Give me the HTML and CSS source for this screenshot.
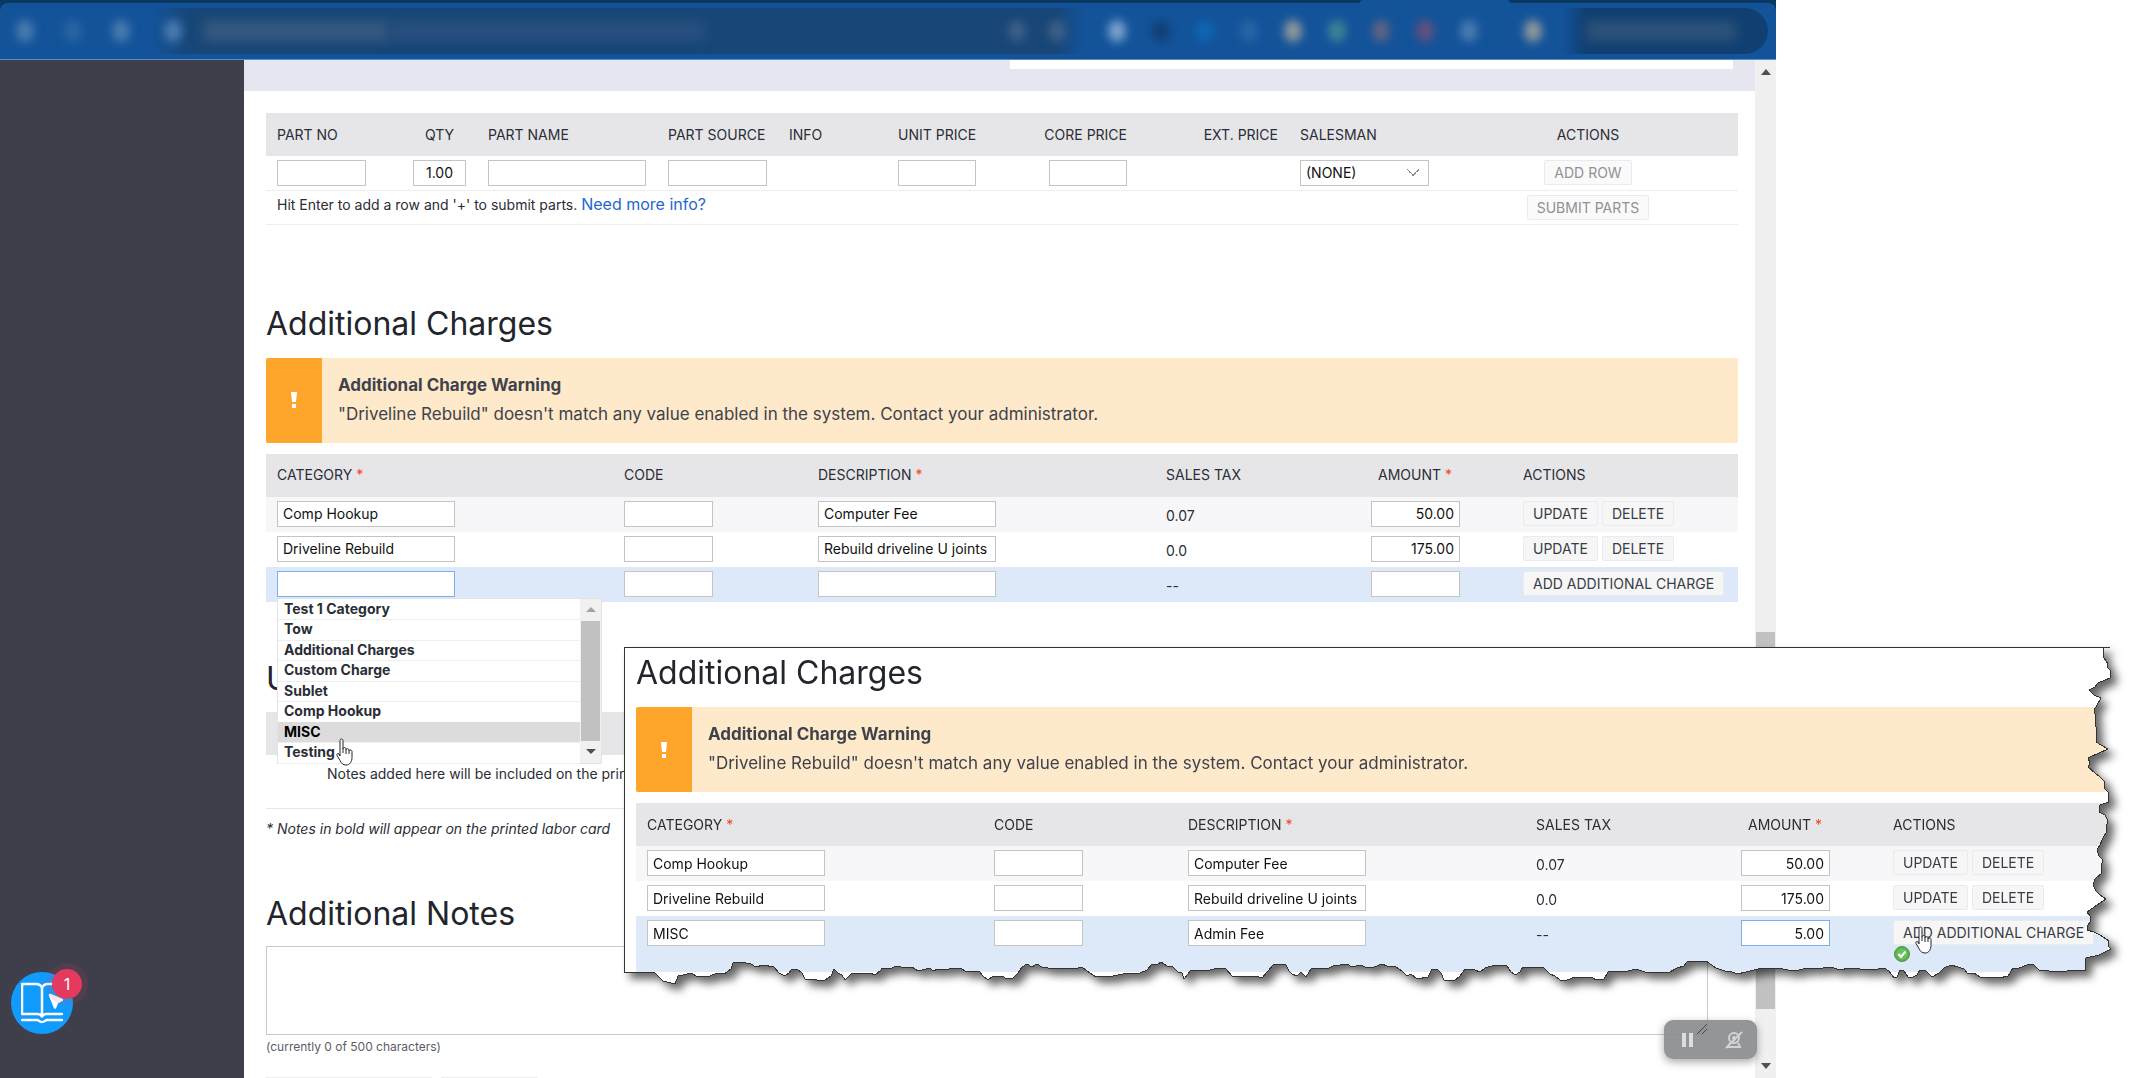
FILE: index.html
```html
<!DOCTYPE html>
<html lang="en">
<head>
    <meta charset="UTF-8">
    <meta name="viewport" content="width=device-width, initial-scale=1.0">
    <title>Additional Charges</title>
    <link rel="stylesheet" href="styles.css">
</head>
<body>
    <div class="window">
        <!-- Browser toolbar, contents blurred out -->
        <div class="tabs"><span class="tab"></span></div>
        <div class="toolbar-wrap">
            <div class="toolbar">
                <div class="nav-icons">
                    <span class="dot"></span>
                    <span class="dot faint"></span>
                    <span class="dot"></span>
                </div>
                <div class="address">
                    <span class="dot"></span>
                    <span class="smudge url"></span>
                    <span class="smudge path"></span>
                    <span class="dot muted push"></span>
                    <span class="dot muted"></span>
                </div>
                <div class="extensions">
                    <span class="dot light"></span>
                    <span class="dot dark"></span>
                    <span class="dot azure"></span>
                    <span class="dot faint"></span>
                    <span class="dot sand"></span>
                    <span class="dot green"></span>
                    <span class="dot brown"></span>
                    <span class="dot red"></span>
                    <span class="dot"></span>
                </div>
                <span class="dot sand avatar"></span>
                <div class="pill"><span class="smudge"></span></div>
            </div>
        </div>

        <div class="app">
            <aside class="sidebar"></aside>

            <main class="main">
                <div class="strip"><div class="strip-box"></div></div>

                <div class="content">
                    <table class="grid parts">
                        <colgroup>
                            <col class="p-no"><col class="p-qty"><col class="p-name"><col class="p-source"><col class="p-info">
                            <col class="p-unit"><col class="p-core"><col class="p-ext"><col><col class="p-actions">
                        </colgroup>
                        <thead>
                            <tr>
                                <th>PART NO</th>
                                <th class="center">QTY</th>
                                <th>PART NAME</th>
                                <th>PART SOURCE</th>
                                <th>INFO</th>
                                <th>UNIT PRICE</th>
                                <th class="right">CORE PRICE</th>
                                <th class="right">EXT. PRICE</th>
                                <th>SALESMAN</th>
                                <th class="center">ACTIONS</th>
                            </tr>
                        </thead>
                        <tbody>
                            <tr>
                                <td><input class="w-code" type="text" aria-label="Part no"></td>
                                <td><input class="w-full center" type="text" value="1.00" aria-label="Qty"></td>
                                <td><input class="w-full" type="text" aria-label="Part name"></td>
                                <td><input class="w-full" type="text" aria-label="Part source"></td>
                                <td></td>
                                <td><input class="w-full" type="text" aria-label="Unit price"></td>
                                <td class="right"><input class="w-price" type="text" aria-label="Core price"></td>
                                <td></td>
                                <td><select aria-label="Salesman"><option>(NONE)</option></select></td>
                                <td class="center"><button class="btn disabled" type="button">ADD ROW</button></td>
                            </tr>
                            <tr>
                                <td class="hint" colspan="9">Hit Enter to add a row and '+' to submit parts. <a href="#">Need more info?</a></td>
                                <td class="center"><button class="btn disabled" type="button">SUBMIT PARTS</button></td>
                            </tr>
                        </tbody>
                    </table>

                    <h2 class="charges-title">Additional Charges</h2>
                    <div class="alert">
                        <div class="alert-icon">
                            <svg width="6" height="16" viewBox="0 0 6 16"><path d="M0 0h6l-1 10H1zM1 12h4v4H1z" fill="#fff"/></svg>
                        </div>
                        <div class="alert-text">
                            <strong>Additional Charge Warning</strong>
                            <p>"Driveline Rebuild" doesn't match any value enabled in the system. Contact your administrator.</p>
                        </div>
                    </div>
                    <table class="grid charges">
                        <colgroup>
                            <col class="c-category"><col class="c-code"><col class="c-desc"><col class="c-tax"><col class="c-amount"><col>
                        </colgroup>
                        <thead>
                            <tr>
                                <th>CATEGORY <span class="req">*</span></th>
                                <th>CODE</th>
                                <th>DESCRIPTION <span class="req">*</span></th>
                                <th>SALES TAX</th>
                                <th class="amount">AMOUNT <span class="req">*</span></th>
                                <th>ACTIONS</th>
                            </tr>
                        </thead>
                        <tbody>
                            <tr class="odd">
                                <td><input class="w-text" type="text" value="Comp Hookup" aria-label="Category"></td>
                                <td><input class="w-code" type="text" aria-label="Code"></td>
                                <td><input class="w-text" type="text" value="Computer Fee" aria-label="Description"></td>
                                <td class="tax">0.07</td>
                                <td class="amount"><input class="w-code right" type="text" value="50.00" aria-label="Amount"></td>
                                <td><div class="actions"><button class="btn" type="button">UPDATE</button><button class="btn" type="button">DELETE</button></div></td>
                            </tr>
                            <tr>
                                <td><input class="w-text" type="text" value="Driveline Rebuild" aria-label="Category"></td>
                                <td><input class="w-code" type="text" aria-label="Code"></td>
                                <td><input class="w-text" type="text" value="Rebuild driveline U joints" aria-label="Description"></td>
                                <td class="tax">0.0</td>
                                <td class="amount"><input class="w-code right" type="text" value="175.00" aria-label="Amount"></td>
                                <td><div class="actions"><button class="btn" type="button">UPDATE</button><button class="btn" type="button">DELETE</button></div></td>
                            </tr>
                            <tr class="active">
                                <td>
                                    <div class="combo">
                                        <input class="w-text focused" type="text" aria-label="Category">
                                        <div class="dropdown">
                                            <ul class="options">
                                                <li>Test 1 Category</li>
                                                <li>Tow</li>
                                                <li>Additional Charges</li>
                                                <li>Custom Charge</li>
                                                <li>Sublet</li>
                                                <li>Comp Hookup</li>
                                                <li class="hover">MISC</li>
                                                <li>Testing</li>
                                            </ul>
                                            <div class="list-scroll">
                                                <svg class="arrow" width="10" height="5" viewBox="0 0 10 5"><path d="M0 5l5-5 5 5z" fill="#a3a3a3"/></svg>
                                                <div class="list-thumb"></div>
                                                <svg class="arrow" width="10" height="5" viewBox="0 0 10 5"><path d="M0 0l5 5 5-5z" fill="#505050"/></svg>
                                            </div>
                                            <svg class="hand" width="20" height="28" viewBox="0 0 20 28">
                                                <path d="M4 2.5c0-2 3-2 3 0v8.5c0-2 3-2 3 0v1c0-2 3-1.5 3 0v1c0-1.5 3-1.5 3 .5v6c0 4-2 7.5-6 7.5-3 0-4.500-1.500-6-4.500l-3-5c-.8-1.500.8-2.500 2-1.500L4 18z" fill="#fff" stroke="#23252d"/>
                                                <path d="M7 11v4M10 12v4M13 13v3" stroke="#23252d"/>
                                            </svg>
                                        </div>
                                    </div>
                                </td>
                                <td><input class="w-code" type="text" aria-label="Code"></td>
                                <td><input class="w-text" type="text" aria-label="Description"></td>
                                <td class="tax">--</td>
                                <td class="amount"><input class="w-code right" type="text" aria-label="Amount"></td>
                                <td><div class="actions"><button class="btn" type="button">ADD ADDITIONAL CHARGE</button></div></td>
                            </tr>
                        </tbody>
                    </table>

                    <h2 class="notes-title">U</h2>
                    <div class="notes-head"></div>
                    <p class="notes-row">Notes added here will be included on the printed labor card</p>
                    <p class="notes-hint">* Notes in bold will appear on the printed labor card</p>

                    <h2 class="extra-title"><label for="notes">Additional Notes</label></h2>
                    <textarea id="notes"></textarea>
                    <p class="counter">(currently 0 of 500 characters)</p>
                    <div class="foot-buttons"><span class="foot-wide"></span><span class="foot-short"></span></div>
                </div>
            </main>

            <div class="scrollbar">
                <svg class="arrow" width="10" height="6" viewBox="0 0 10 6"><path d="M0 6l5-6 5 6z" fill="#505050"/></svg>
                <div class="space-above"></div>
                <div class="thumb"></div>
                <div class="space-below"></div>
                <svg class="arrow" width="10" height="6" viewBox="0 0 10 6"><path d="M0 0l5 6 5-6z" fill="#505050"/></svg>
            </div>
        </div>

        <button class="help" type="button" aria-label="Help guides">
            <svg width="42" height="42" viewBox="0 0 42 42" fill="none" stroke="#fff" stroke-width="2.5" stroke-linecap="round" stroke-linejoin="round">
                <path d="M21 6c-1-3-3-4-6-4H1v30h16c2 0 3 1 4 2.500 1-1.500 2-2.500 4-2.500h16M21 6c1-3 3-4 6-4h6M21 6v28"/>
                <path d="M1 38h15c2 0 2 2 5 2s3-2 5-2h15"/>
                <path d="M29 13l12 5-5 2.500-2 5z" fill="#fff"/>
            </svg>
            <span class="badge">1</span>
        </button>
    </div>

    <!-- Second shot with torn edges, laid over the page -->
    <div class="torn">
        <div class="torn-page">
            <h2>Additional Charges</h2>
            <div class="alert">
                <div class="alert-icon">
                    <svg width="6" height="16" viewBox="0 0 6 16"><path d="M0 0h6l-1 10H1zM1 12h4v4H1z" fill="#fff"/></svg>
                </div>
                <div class="alert-text">
                    <strong>Additional Charge Warning</strong>
                    <p>"Driveline Rebuild" doesn't match any value enabled in the system. Contact your administrator.</p>
                </div>
            </div>
            <table class="grid charges">
                <colgroup>
                    <col class="c-category"><col class="c-code"><col class="c-desc"><col class="c-tax"><col class="c-amount"><col>
                </colgroup>
                <thead>
                    <tr>
                        <th>CATEGORY <span class="req">*</span></th>
                        <th>CODE</th>
                        <th>DESCRIPTION <span class="req">*</span></th>
                        <th>SALES TAX</th>
                        <th class="amount">AMOUNT <span class="req">*</span></th>
                        <th>ACTIONS</th>
                    </tr>
                </thead>
                <tbody>
                    <tr class="odd">
                        <td><input class="w-text" type="text" value="Comp Hookup" aria-label="Category"></td>
                        <td><input class="w-code" type="text" aria-label="Code"></td>
                        <td><input class="w-text" type="text" value="Computer Fee" aria-label="Description"></td>
                        <td class="tax">0.07</td>
                        <td class="amount"><input class="w-code right" type="text" value="50.00" aria-label="Amount"></td>
                        <td><div class="actions"><button class="btn" type="button">UPDATE</button><button class="btn" type="button">DELETE</button></div></td>
                    </tr>
                    <tr>
                        <td><input class="w-text" type="text" value="Driveline Rebuild" aria-label="Category"></td>
                        <td><input class="w-code" type="text" aria-label="Code"></td>
                        <td><input class="w-text" type="text" value="Rebuild driveline U joints" aria-label="Description"></td>
                        <td class="tax">0.0</td>
                        <td class="amount"><input class="w-code right" type="text" value="175.00" aria-label="Amount"></td>
                        <td><div class="actions"><button class="btn" type="button">UPDATE</button><button class="btn" type="button">DELETE</button></div></td>
                    </tr>
                    <tr class="active tall">
                        <td><input class="w-text" type="text" value="MISC" aria-label="Category"></td>
                        <td><input class="w-code" type="text" aria-label="Code"></td>
                        <td><input class="w-text" type="text" value="Admin Fee" aria-label="Description"></td>
                        <td class="tax">--</td>
                        <td class="amount"><input class="w-code right focused" type="text" value="5.00" aria-label="Amount"></td>
                        <td>
                            <div class="combo actions">
                                <button class="btn" type="button">ADD ADDITIONAL CHARGE</button>
                                <svg class="hand" width="20" height="28" viewBox="0 0 20 28">
                                    <path d="M4 2.500c0-2 3-2 3 0v8.500c0-2 3-2 3 0v1c0-2 3-1.500 3 0v1c0-1.500 3-1.500 3 .5v6c0 4-2 7.500-6 7.500-3 0-4.500-1.500-6-4.500l-3-5c-.8-1.500.8-2.500 2-1.500L4 18z" fill="#fff" stroke="#23252d"/>
                                    <path d="M7 11v4M10 12v4M13 13v3" stroke="#23252d"/>
                                </svg>
                            </div>
                            <svg class="saved" width="16" height="16" viewBox="0 0 16 16">
                                <circle cx="8" cy="8" r="7.500" fill="#5cb04e" stroke="#4a9a3e"/>
                                <circle cx="8" cy="8" r="5.500" fill="#6cc05c"/>
                                <path d="M4.500 8l2.500 3 4.500-5.500" fill="none" stroke="#fff" stroke-width="2"/>
                            </svg>
                        </td>
                    </tr>
                </tbody>
            </table>
        </div>
        <svg class="torn-edge" width="1492" height="340" viewBox="0 0 1492 340">
            <defs>
                <path id="edge" d="M0 0H1486L1479 1L1480 11L1484 17L1483 20L1487 24L1486 31L1474 36L1471 40L1465 43L1470 48L1477 51L1473 58L1470 63L1472 70L1471 76L1473 84L1472 95L1477 98L1484 102L1475 106L1464 111L1466 116L1464 120L1471 126L1476 130L1481 135L1480 141L1484 145L1485 155L1476 158L1475 165L1481 168L1484 174L1482 180L1483 184L1478 193L1476 198L1473 203L1475 209L1479 213L1477 219L1478 226L1471 232L1469 238L1472 244L1476 248L1482 252L1473 258L1463 265L1466 269L1467 273L1463 280L1463 283L1470 285L1476 288L1485 294L1484 299L1487 302L1475 308L1462 311L1461 324L1450 323L1437 325L1425 324L1415 323L1409 317L1403 318L1395 321L1389 321L1384 329L1375 331L1364 330L1356 330L1350 326L1344 327L1340 322L1334 320L1327 318L1320 321L1315 326L1308 330L1301 323L1296 323L1293 328L1289 330L1284 330L1280 324L1276 323L1273 330L1270 331L1265 324L1260 321L1248 323L1236 322L1225 321L1216 323L1210 321L1204 320L1194 322L1183 321L1175 323L1164 323L1154 321L1144 322L1138 321L1130 323L1122 325L1113 327L1106 324L1101 324L1092 321L1082 314L1070 314L1063 315L1060 319L1053 321L1044 326L1036 325L1024 326L1012 322L1004 324L996 324L984 325L980 332L972 333L968 330L963 331L951 330L943 333L936 333L931 329L926 327L919 320L909 321L899 320L896 325L891 328L887 325L883 319L871 318L861 321L856 325L851 323L841 322L836 329L830 334L820 333L817 326L813 322L808 322L804 330L793 332L787 327L783 329L778 324L772 320L763 319L758 317L750 320L744 321L736 318L728 320L723 317L709 319L703 322L695 321L687 322L682 330L677 325L673 329L668 327L665 324L662 318L650 317L644 324L638 331L632 329L623 330L608 329L602 322L594 321L586 323L578 324L567 323L560 332L558 326L554 325L549 320L543 319L537 315L533 318L528 317L523 323L516 326L499 327L489 329L480 329L472 330L463 324L458 320L450 322L443 321L430 322L418 320L413 317L408 320L403 317L398 320L394 326L389 331L383 332L378 329L369 329L364 333L359 329L355 324L343 325L336 321L325 322L314 322L309 324L306 321L294 324L288 320L281 321L273 319L265 322L258 321L257 323L251 328L246 326L237 327L228 326L221 333L218 328L214 326L210 322L207 329L201 333L193 333L181 332L178 326L173 322L168 322L165 326L161 329L155 326L150 320L139 318L132 320L127 317L117 315L109 316L107 322L100 327L93 326L86 329L73 330L68 326L54 329L51 337L39 334L31 326L20 325L8 325L0 326Z"/>
                <clipPath id="torn-clip"><use href="#edge"/></clipPath>
            </defs>
            <use href="#edge" fill="none" stroke="#333" stroke-width="1" shape-rendering="crispEdges"/>
        </svg>
    </div>

    <div class="recorder">
        <button type="button" aria-label="Pause">
            <svg width="12" height="14" viewBox="0 0 12 14"><path d="M1 0h4v14H1zM8 0h4v14H8z" fill="#dcdddf"/></svg>
        </button>
        <button type="button" aria-label="Camera off">
            <svg width="18" height="18" viewBox="0 0 18 18" fill="none" stroke="#d2d3d5" stroke-width="2">
                <circle cx="9" cy="7" r="5"/><circle cx="9" cy="7" r="1"/>
                <path d="M5 12l-2 4h12l-2-4M1 17L17 1"/>
            </svg>
        </button>
        <svg class="grip" width="12" height="12" viewBox="0 0 12 12"><path d="M1 11L11 1M6 11l5-5" stroke="#4a4b4e"/></svg>
    </div>
</body>
</html>
```
FILE: styles.css
```css
* {
    box-sizing: border-box;
}
body {
    margin: 0;
    padding-right: 356px;
    background: #fff;
    color: #2b2d36;
    font-family: Inter, "Open Sans", sans-serif;
    font-size: 14px;
    line-height: 20px;
    height: 100vh;
    overflow: hidden;
    position: relative;
}
.window {
    height: 100vh;
    display: flex;
    flex-direction: column;
    position: relative;
}
h2 {
    margin: 0;
    font-size: 32px;
    line-height: 44px;
    font-weight: 400;
    color: #23252d;
}
p {
    margin: 0;
}
a {
    color: #1f66d0;
    font-size: 16px;
    text-decoration: none;
}

/* Browser toolbar */
.tabs {
    flex: none;
    height: 3px;
    display: flex;
    justify-content: flex-end;
    padding-right: 266px;
    background: #0b3763;
}
.tab {
    width: 150px;
    background: #13539a;
    border-radius: 3px 3px 0 0;
}
.toolbar-wrap {
    flex: none;
    background: #0b3763;
}
.toolbar {
    height: 57px;
    display: flex;
    align-items: center;
    padding-right: 8px;
    background: #13539a;
    border-bottom: 1px solid #5b8fc4;
    border-radius: 8px 8px 0 0;
    overflow: hidden;
}
.nav-icons {
    width: 152px;
    display: flex;
    gap: 30px;
    padding-left: 16px;
}
.address {
    flex: 1;
    height: 46px;
    display: flex;
    align-items: center;
    margin-right: 24px;
    padding: 0 18px 0 12px;
    background: linear-gradient(90deg, #13539a, #174677 40px, #174677 calc(100% - 30px), #13539a);
}
.dot {
    flex: none;
    width: 18px;
    height: 22px;
    border-radius: 50%;
    background: #4a7cb0;
    filter: blur(5px);
}
.dot.faint { background: #2a65a5; }
.dot.muted { background: #3e5f87; }
.dot.light { background: #7ba4cc; }
.dot.dark { background: #113f74; }
.dot.azure { background: #0f66b5; }
.dot.sand { background: #93989b; }
.dot.green { background: #3f8496; }
.dot.brown { background: #606482; }
.dot.red { background: #65507c; }
.push {
    margin-left: auto;
    margin-right: 22px;
}
.smudge {
    height: 20px;
    background: #37597f;
    filter: blur(6px);
}
.url {
    width: 185px;
    margin-left: 22px;
}
.path {
    width: 316px;
    background: #28507e;
}
.extensions {
    display: flex;
    gap: 26px;
    margin-right: 46px;
}
.avatar {
    margin-right: 20px;
}
.pill {
    width: 206px;
    height: 46px;
    padding: 13px 32px 13px 24px;
    background: linear-gradient(90deg, #13539a, #103f72 24px);
    border-radius: 0 23px 23px 0;
}
.pill .smudge {
    display: block;
    background: #2d5379;
}

/* Page layout */
.app {
    flex: 1;
    min-height: 0;
    display: flex;
}
.sidebar {
    flex: none;
    width: 244px;
    background: #3f3f4b;
}
.main {
    flex: 1;
    min-width: 0;
    overflow: hidden;
}
.strip {
    height: 31px;
    padding: 0 22px 0 766px;
    background: #e5e6f0;
}
.strip-box {
    height: 9px;
    background: #fff;
}
.content {
    padding: 22px 17px 0 22px;
}

/* Tables */
.grid {
    width: 100%;
    table-layout: fixed;
    border-collapse: collapse;
}
.grid th {
    height: 43px;
    padding: 0 11px;
    background: #e6e6e8;
    font-weight: 400;
    text-align: left;
    white-space: nowrap;
}
.grid td {
    height: 34px;
    padding: 0 11px;
    white-space: nowrap;
}
.grid td input,
.grid td select,
.grid td .btn {
    vertical-align: middle;
}
.grid .center {
    text-align: center;
}
.grid .right {
    text-align: right;
}
.parts td {
    border-bottom: 1px solid #eee;
}
.parts .hint {
    padding-bottom: 5px;
}
.p-no { width: 136px; }
.p-qty { width: 75px; }
.p-name { width: 180px; }
.p-source { width: 121px; }
.p-info { width: 109px; }
.p-unit { width: 100px; }
.p-core { width: 151px; }
.p-ext { width: 151px; }
.p-actions { width: 300px; }

.c-category { width: 347px; }
.c-code { width: 194px; }
.c-desc { width: 348px; }
.c-tax { width: 205px; }
.c-amount { width: 152px; }
.charges .amount {
    padding-right: 52px;
    text-align: right;
}
.charges th.amount {
    padding-right: 60px;
}
.charges td {
    height: 35px;
    padding-top: 4px;
    vertical-align: top;
}
.charges td input {
    display: block;
}
.charges .amount input {
    margin-left: auto;
}
.charges .tax {
    padding-top: 9px;
}
.odd {
    background: #f7f7f9;
}
.active {
    background: #dde8f9;
}
.req {
    color: #f0431f;
}

/* Form controls */
input,
select {
    height: 26px;
    padding: 0 5px;
    border: 1px solid #c4c4c4;
    background: #fff;
    color: #111;
    font-family: inherit;
    font-size: 14px;
}
select {
    width: 129px;
    appearance: none;
    background: #fff;
    background-image: linear-gradient(45deg, transparent 50%, #888 50%, #888 60%, transparent 60%), linear-gradient(-45deg, transparent 50%, #888 50%, #888 60%, transparent 60%);
    background-size: 6px 8px;
    background-position: right 15px center, right 9px center;
    background-repeat: no-repeat;
}
.w-text { width: 178px; }
.w-code { width: 89px; }
.w-price { width: 78px; }
.w-full { width: 100%; }
input.focused {
    border-color: #78b1e6;
}
.btn {
    height: 25px;
    padding: 0 9px;
    border: 1px solid #ebebed;
    border-radius: 2px;
    background: #f6f6f7;
    color: #3a3c45;
    font-family: inherit;
    font-size: 14px;
}
.btn.disabled {
    color: #909095;
    background: #fafafa;
}
.actions {
    display: flex;
    gap: 4px;
}

/* Warning */
.charges-title {
    margin: 77px 0 12px;
}
.alert {
    display: flex;
    height: 85px;
    margin-bottom: 11px;
    background: #fee9ca;
    border-radius: 2px;
    overflow: hidden;
}
.alert-icon {
    flex: none;
    width: 56px;
    display: flex;
    align-items: center;
    justify-content: center;
    background: #fda62b;
}
.alert-text {
    padding: 13px 16px;
    font-size: 17px;
    line-height: 29px;
    color: #40424b;
}
.alert-text strong {
    display: block;
}

/* Category list */
.combo {
    position: relative;
}
.dropdown {
    position: absolute;
    top: 27px;
    left: 0;
    z-index: 2;
    width: 325px;
    height: 166px;
    display: flex;
    background: #fff;
    border: 1px solid #e3e3e3;
}
.options {
    flex: 1;
    display: grid;
    grid-auto-rows: 1fr;
    margin: 0;
    padding: 0;
    list-style: none;
    font-weight: 700;
}
.options li {
    padding-left: 6px;
    box-shadow: 0 1px #eee;
}
.options .hover {
    background: #dcdcdc;
    color: #000;
}
.list-scroll {
    width: 21px;
    display: flex;
    flex-direction: column;
    align-items: center;
    background: #f1f1f1;
}
.list-scroll .arrow {
    margin: 8px 0 9px;
}
.list-thumb {
    flex: 1;
    width: 19px;
    background: #c1c1c1;
}
.hand {
    position: absolute;
    top: 139px;
    left: 58px;
    fill: none;
}

/* Notes */
.notes-title {
    margin: 55px 0 11px;
}
.notes-head {
    height: 43px;
    background: #e6e6e8;
}
.notes-row {
    height: 54px;
    padding: 9px 0 0 61px;
    border-bottom: 1px solid #e6e6e8;
}
.notes-hint {
    margin-top: 10px;
    font-style: italic;
}
.extra-title {
    margin: 53px 0 10px;
}
textarea {
    display: block;
    width: 1442px;
    max-width: 100%;
    height: 89px;
    border: 1px solid #c8c8c8;
    resize: both;
}
.counter {
    margin-top: 2px;
    font-size: 12px;
    color: #5b5d66;
}
.foot-buttons {
    display: flex;
    gap: 9px;
    margin-top: 20px;
}
.foot-wide,
.foot-short {
    width: 166px;
    height: 25px;
    background: #eee;
}
.foot-short {
    width: 97px;
}

/* Page scrollbar */
.scrollbar {
    flex: none;
    width: 21px;
    display: flex;
    flex-direction: column;
    align-items: center;
    padding: 9px 0;
    background: #f0f0f0;
}
.space-above { flex: 557; }
.space-below { flex: 54; }
.thumb {
    flex: 377;
    width: 19px;
    background: #c1c1c1;
}

/* Help launcher */
.help {
    position: absolute;
    left: 11px;
    bottom: 44px;
    width: 62px;
    height: 62px;
    display: flex;
    align-items: center;
    justify-content: center;
    padding: 0;
    border: 0;
    border-radius: 50%;
    background: #119bfc;
}
.badge {
    position: absolute;
    top: -3px;
    right: -9px;
    width: 30px;
    height: 30px;
    border-radius: 50%;
    background: #e43a5f;
    box-shadow: 0 0 0 6px rgba(228, 58, 95, 0.12);
    color: #fff;
    font-family: Inter, sans-serif;
    font-size: 16px;
    line-height: 30px;
}

/* Torn overlay */
.torn {
    position: absolute;
    top: 647px;
    left: 624px;
    filter: drop-shadow(6px 6px 4px rgba(0, 0, 0, 0.6));
}
.torn-page {
    width: 1492px;
    height: 340px;
    padding: 4px 8px 0 12px;
    background: #fff;
    clip-path: url(#torn-clip);
}
.torn-page h2 {
    margin-bottom: 12px;
}
.torn-page .tall td {
    height: 56px;
}
.torn-page .hand {
    top: 6px;
    left: 22px;
}
.saved {
    display: block;
    margin: 1px 0 0 1px;
}
.torn-edge {
    position: absolute;
    top: 0;
    left: 0;
    overflow: visible;
}

/* Recorder controls */
.recorder {
    position: absolute;
    left: 1664px;
    bottom: 19px;
    display: flex;
    width: 93px;
    height: 39px;
    border-radius: 9px;
    background: rgba(136, 138, 141, 0.9);
    box-shadow: 0 3px 8px rgba(0, 0, 0, 0.35);
}
.recorder button {
    flex: 1;
    display: flex;
    align-items: center;
    justify-content: center;
    padding: 0;
    border: 0;
    background: none;
}
.grip {
    position: absolute;
    top: 3px;
    left: 32px;
}
```
